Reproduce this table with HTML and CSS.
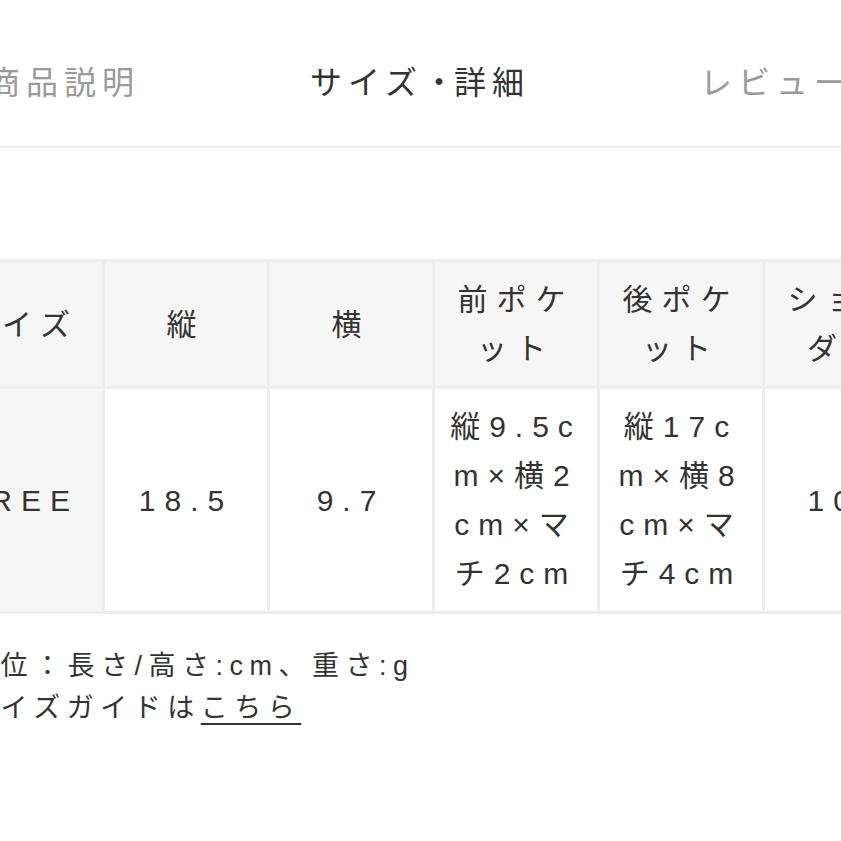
FILE: index.html
```html
<!DOCTYPE html>
<html lang="ja">
<head>
<meta charset="utf-8">
<link rel="stylesheet" href="styles.css">
</head>
<body>
<div class="page">
  <nav class="tabs">
    <div class="tab-row">
      <div class="tab">商品説明</div>
      <div class="tab active">サイズ<span class="dot">・</span>詳細</div>
      <div class="tab">レビュー</div>
    </div>
  </nav>
  <section class="size">
    <table class="size-table">
      <thead>
        <tr>
          <th>サイズ</th>
          <th>縦</th>
          <th>横</th>
          <th>前ポケット</th>
          <th>後ポケット</th>
          <th>ショルダー</th>
        </tr>
      </thead>
      <tbody>
        <tr>
          <th>FREE</th>
          <td>18.5</td>
          <td>9.7</td>
          <td>縦9.5cm×横2cm×マチ2cm</td>
          <td>縦17cm×横8cm×マチ4cm</td>
          <td>105</td>
        </tr>
      </tbody>
    </table>
    <div class="notes">
      <p class="note">単位：長さ/高さ:cm、重さ:g</p>
      <p class="note">サイズガイドは<a class="guide-link" href="#">こちら</a></p>
    </div>
  </section>
</div>
</body>
</html>
```

FILE: styles.css
```css
html, body {
  margin: 0;
  padding: 0;
  background: #fff;
  overflow: hidden;
}

body {
  width: 841px;
  height: 841px;
  font-family: "Liberation Sans", "Noto Sans CJK JP", sans-serif;
  color: #333;
}

.page {
  width: 841px;
}

.tabs {
  border-bottom: 2px solid #ebebeb;
  padding: 63px 0 43px;
}

.tab-row {
  display: flex;
  margin-left: -114px;
}

.tab {
  flex: 0 0 356px;
  text-align: center;
  font-size: 32px;
  line-height: 40px;
  letter-spacing: 6px;
  color: #9a9a9a;
}

.tab.active {
  color: #333;
}

.dot {
  letter-spacing: -1px;
}

.size {
  margin-top: 111px;
  margin-left: -63px;
}

.size-table {
  border-collapse: separate;
  border-spacing: 0;
  table-layout: fixed;
  width: 993px;
  border-right: 3px solid #ededed;
  border-bottom: 3px solid #ededed;
}

.size-table th,
.size-table td {
  box-sizing: border-box;
  width: 165px;
  padding: 13px 11px;
  border-left: 3px solid #ededed;
  border-top: 3px solid #ededed;
  font-size: 30px;
  line-height: 49px;
  letter-spacing: 9px;
  font-weight: normal;
  text-align: center;
  vertical-align: middle;
  color: #333;
  word-break: break-all;
  line-break: anywhere;
}

.size-table th {
  background: #f6f6f6;
}

.size-table td {
  background: #fff;
}

.notes {
  margin-top: 31px;
  padding-left: 30px;
}

.note {
  margin: 0;
  font-size: 27px;
  line-height: 42px;
  letter-spacing: 6.5px;
  color: #333;
}

.guide-link {
  color: #333;
  text-decoration: underline;
  text-decoration-thickness: 2px;
  text-underline-offset: 6px;
}
```
